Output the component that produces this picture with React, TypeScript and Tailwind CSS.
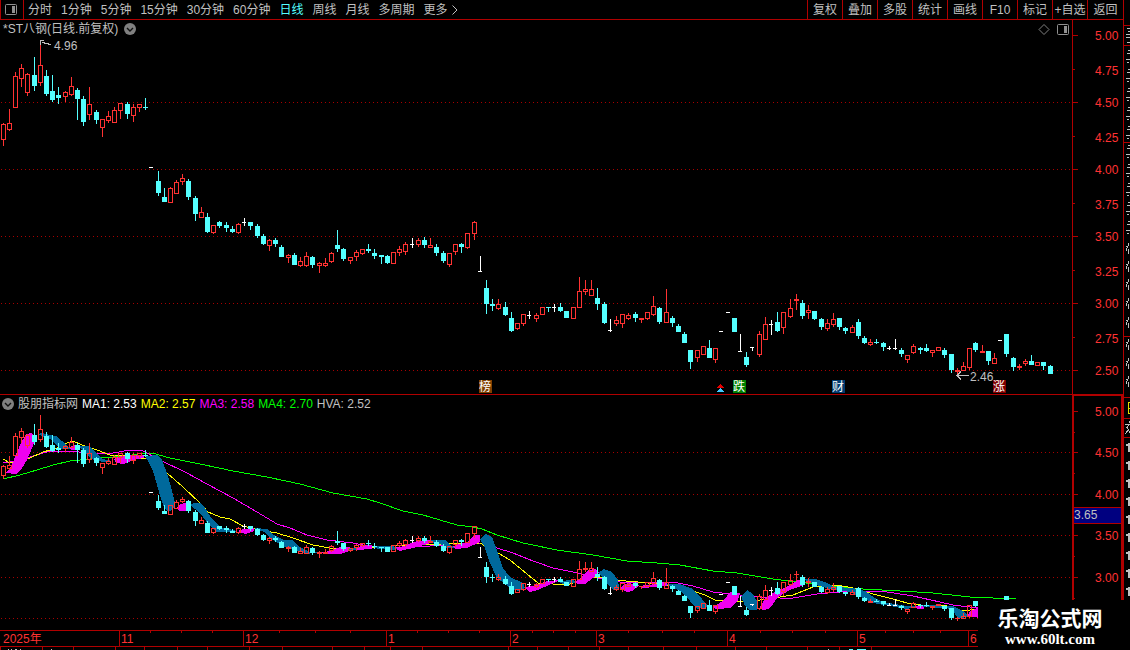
import React from "react";
import clsx from "clsx";

type Kind = "r" | "c" | "w";
// x, high, body top, body bottom, low, kind
type Candle = [number, number, number, number, number, Kind];

const RED = "#ff3232";
const CYAN = "#54ffff";
const LINE = "#b00000";
const GREY = "#c0c0c0";
const BLUE = "#00699c";
const PINK = "#f000f0";
const COLORS: Record<Kind, string> = { r: RED, c: CYAN, w: "#ffffff" };

const periods = ["分时", "1分钟", "5分钟", "15分钟", "30分钟", "60分钟", "日线", "周线", "月线", "多周期"];
const actions = ["复权", "叠加", "多股", "统计", "画线", "F10", "标记", "+自选", "返回"];

const candles: Candle[] = [
    [3, 123, 124, 140, 146, "r"], [9, 109, 123, 130, 131, "r"], [15, 72, 76, 108, 108, "r"], [21, 64, 68, 79, 87, "r"],
    [27, 73, 74, 93, 96, "r"], [34, 57, 75, 86, 91, "c"], [40, 43, 65, 83, 86, "r"], [46, 70, 76, 94, 96, "c"],
    [52, 75, 91, 100, 102, "c"], [58, 87, 95, 98, 104, "c"], [65, 91, 92, 97, 102, "r"], [71, 77, 86, 95, 96, "r"],
    [77, 88, 90, 99, 120, "c"], [83, 96, 99, 122, 126, "c"], [89, 87, 104, 115, 120, "r"], [96, 110, 112, 120, 124, "c"],
    [102, 119, 119, 128, 137, "r"], [108, 111, 116, 121, 123, "r"], [114, 107, 110, 123, 123, "r"], [120, 103, 103, 111, 119, "r"],
    [127, 102, 104, 114, 119, "c"], [133, 104, 107, 116, 122, "r"], [139, 104, 104, 108, 112, "r"], [145, 98, 107, 108, 110, "c"],
    [151, 167, 167, 168, 168, "w"], [158, 171, 181, 193, 196, "c"], [164, 188, 197, 202, 202, "c"], [170, 187, 188, 203, 203, "r"],
    [176, 180, 182, 194, 194, "r"], [182, 174, 178, 182, 185, "r"], [188, 179, 181, 197, 200, "c"], [195, 196, 198, 214, 221, "c"],
    [201, 207, 212, 218, 218, "r"], [207, 213, 217, 232, 233, "c"], [213, 225, 225, 233, 234, "r"], [219, 221, 222, 226, 228, "c"],
    [226, 222, 225, 228, 232, "c"], [232, 226, 229, 232, 233, "c"], [238, 223, 224, 233, 234, "r"], [244, 218, 222, 223, 226, "w"],
    [250, 222, 222, 226, 230, "c"], [257, 224, 226, 236, 238, "c"], [263, 234, 236, 244, 245, "c"], [269, 239, 240, 246, 251, "r"],
    [275, 238, 240, 244, 247, "c"], [281, 245, 247, 257, 257, "c"], [288, 254, 255, 258, 263, "r"], [294, 253, 255, 265, 265, "c"],
    [300, 257, 261, 266, 267, "r"], [306, 252, 256, 266, 267, "r"], [312, 256, 257, 265, 268, "c"], [319, 262, 263, 266, 273, "r"],
    [325, 258, 263, 266, 267, "r"], [331, 252, 253, 262, 263, "r"], [337, 230, 245, 249, 252, "c"], [343, 248, 249, 259, 261, "c"],
    [350, 257, 257, 261, 264, "r"], [356, 250, 252, 257, 261, "r"], [362, 249, 249, 254, 255, "r"], [368, 244, 249, 251, 253, "c"],
    [374, 249, 253, 256, 259, "c"], [381, 255, 255, 257, 264, "c"], [387, 255, 256, 263, 264, "c"], [393, 252, 252, 264, 264, "r"],
    [399, 246, 249, 253, 256, "r"], [405, 242, 244, 252, 255, "r"], [412, 238, 244, 245, 248, "w"], [418, 238, 240, 245, 247, "r"],
    [424, 237, 240, 245, 248, "c"], [430, 238, 245, 248, 248, "r"], [436, 244, 247, 253, 256, "c"], [443, 251, 253, 261, 263, "c"],
    [449, 253, 253, 265, 267, "r"], [455, 244, 244, 252, 255, "r"], [461, 243, 244, 247, 253, "c"], [467, 233, 233, 248, 249, "r"],
    [474, 221, 222, 234, 240, "r"], [480, 256, 271, 272, 272, "w"], [486, 280, 288, 304, 314, "c"], [492, 299, 304, 306, 311, "c"],
    [498, 299, 304, 309, 310, "r"], [505, 302, 307, 315, 316, "c"], [511, 312, 318, 331, 332, "c"], [517, 323, 323, 329, 330, "r"],
    [523, 314, 314, 324, 326, "r"], [529, 311, 315, 316, 319, "w"], [536, 313, 315, 319, 322, "r"], [542, 307, 307, 315, 315, "r"],
    [548, 307, 307, 308, 312, "c"], [554, 304, 307, 308, 312, "w"], [560, 303, 307, 311, 312, "c"], [566, 311, 311, 318, 318, "c"],
    [573, 307, 307, 319, 319, "r"], [579, 277, 291, 308, 308, "r"], [585, 280, 289, 292, 295, "r"], [591, 280, 289, 296, 296, "r"],
    [597, 288, 298, 304, 310, "c"], [604, 302, 304, 323, 324, "c"], [610, 319, 330, 331, 332, "w"], [616, 316, 320, 324, 326, "r"],
    [622, 314, 314, 324, 328, "r"], [628, 313, 315, 319, 320, "r"], [635, 312, 314, 318, 322, "c"], [641, 318, 318, 320, 323, "r"],
    [647, 312, 312, 319, 320, "r"], [653, 296, 306, 315, 316, "r"], [659, 307, 308, 322, 324, "c"], [666, 289, 312, 323, 323, "r"],
    [672, 316, 318, 323, 327, "c"], [678, 324, 326, 332, 332, "c"], [684, 332, 334, 343, 343, "c"], [690, 350, 350, 362, 369, "c"],
    [697, 350, 350, 358, 362, "r"], [703, 346, 346, 355, 355, "r"], [709, 340, 348, 358, 358, "c"], [715, 348, 348, 360, 363, "r"],
    [721, 331, 331, 332, 332, "w"], [728, 312, 312, 313, 313, "w"], [734, 318, 318, 332, 332, "c"], [740, 334, 351, 352, 352, "w"],
    [746, 352, 357, 365, 367, "c"], [752, 347, 347, 348, 351, "w"], [759, 331, 334, 355, 357, "r"], [765, 317, 324, 340, 340, "r"],
    [771, 320, 324, 325, 335, "w"], [777, 312, 322, 331, 332, "c"], [783, 312, 312, 328, 334, "r"], [790, 299, 308, 317, 318, "r"],
    [796, 294, 299, 301, 310, "r"], [802, 300, 303, 316, 319, "c"], [808, 305, 310, 313, 319, "r"], [814, 311, 311, 319, 320, "c"],
    [821, 318, 319, 327, 330, "c"], [827, 319, 323, 329, 331, "r"], [833, 313, 319, 325, 327, "r"], [839, 318, 318, 327, 330, "c"],
    [845, 327, 328, 331, 334, "c"], [852, 325, 327, 333, 333, "r"], [858, 319, 322, 336, 339, "c"], [864, 336, 338, 343, 344, "c"],
    [870, 339, 342, 345, 346, "r"], [876, 339, 342, 343, 344, "c"], [883, 342, 343, 347, 351, "c"], [889, 346, 348, 349, 350, "w"],
    [895, 339, 348, 349, 350, "w"], [901, 348, 350, 354, 357, "c"], [907, 355, 355, 360, 363, "r"], [913, 344, 346, 353, 354, "r"],
    [920, 347, 348, 350, 354, "c"], [926, 344, 348, 351, 352, "c"], [932, 350, 350, 353, 357, "r"], [938, 347, 347, 351, 351, "r"],
    [944, 348, 350, 355, 358, "c"], [951, 354, 354, 370, 373, "c"], [957, 368, 370, 372, 375, "r"], [963, 362, 366, 371, 371, "r"],
    [969, 348, 348, 368, 370, "r"], [975, 342, 343, 350, 352, "c"], [982, 345, 351, 353, 353, "r"], [988, 351, 351, 361, 365, "c"],
    [994, 353, 358, 364, 364, "r"], [1000, 340, 340, 341, 341, "w"], [1006, 334, 334, 354, 357, "c"], [1013, 357, 358, 367, 371, "c"],
    [1019, 364, 366, 368, 370, "r"], [1025, 359, 361, 364, 366, "r"], [1031, 355, 361, 365, 365, "c"], [1037, 362, 362, 366, 366, "r"],
    [1043, 362, 362, 366, 370, "c"], [1050, 365, 366, 374, 374, "c"],
];

const maLines = [
    {
        color: "#00ff00",
        points: "3,479 20,475 37,470 53,465 70,461 100,458 127,456 143,453 152,453 170,458 200,464 233,471 267,477 300,484 333,493 367,499 380,503 403,511 423,515 440,520 457,525 473,527 482,529 497,535 523,543 557,550 593,555 627,561 657,563 680,565 713,571 737,573 773,579 797,582 840,587 863,589 900,591 933,593 970,597 1016,599",
    },
    {
        color: "#ff00ff",
        points: "3,462 10,462 30,457 50,451 67,451 90,453 103,454 113,453 130,450 143,451 160,460 187,473 207,484 233,498 257,512 277,524 290,528 307,535 327,540 353,543 373,547 413,547 447,545 453,543 480,543 497,548 513,553 533,561 553,568 573,572 593,577 620,582 673,582 693,586 713,592 730,594 760,597 780,598 793,598 817,594 840,592 867,591 887,592 913,596 940,602 953,605 978,608",
    },
    {
        color: "#ffff00",
        points: "3,459 10,463 30,458 43,452 57,448 67,443 73,441 82,445 97,450 110,455 123,455 143,459 150,457 167,473 183,487 200,503 208,512 220,517 230,519 243,526 260,530 277,533 293,538 313,545 330,548 350,549 370,548 380,547 420,544 447,544 480,543 498,553 510,560 527,574 538,583 553,584 570,584 587,578 600,577 613,580 638,582 667,585 693,591 705,595 715,600 733,601 747,602 760,600 780,597 793,595 813,587 837,585 853,588 873,594 893,599 907,603 920,605 947,606 963,611 978,609",
    },
];

const ribbons: [string, string][] = [
    [PINK, "6,472 9,470 13,462 20,445 26,434 32,433 36,438 32,448 27,460 21,470 16,474 6,473"],
    [BLUE, "38,434 42,433 50,435 56,436 62,441 67,446 72,449 60,449 55,444 50,439 44,437"],
    [PINK, "69,447 76,445 78,449 71,450"],
    [BLUE, "78,446 90,446 95,452 103,459 112,461 103,462 94,460 87,455 82,449"],
    [PINK, "114,459 121,456 133,455 144,455 144,458 133,460 124,464 116,463"],
    [BLUE, "145,456 158,455 162,460 168,476 171,487 175,503 173,510 168,511 164,508 159,492 153,471 148,461"],
    [PINK, "176,508 180,504 186,503 187,511 180,511"],
    [BLUE, "190,505 194,503 200,503 205,508 212,519 220,527 237,531 237,532 217,532 208,524 201,514 195,509"],
    [PINK, "238,531 243,529 254,528 254,531 245,534"],
    [BLUE, "254,528 267,529 274,535 284,540 292,540 300,547 310,552 320,552 307,554 293,550 283,546 273,540 264,532"],
    [PINK, "320,553 329,551 340,547 350,547 350,551 340,554 327,554"],
    [BLUE, "349,548 358,548 358,550 349,550"],
    [PINK, "356,548 364,545 372,545 372,549 356,550"],
    [BLUE, "371,546 393,546 399,549 393,550 378,549"],
    [PINK, "396,549 406,545 417,541 431,540 431,543 417,547 400,551"],
    [BLUE, "431,540 445,540 452,546 455,548 447,548 440,544 431,542"],
    [PINK, "453,546 467,542 475,535 480,535 480,542 467,548 455,549"],
    [BLUE, "480,539 486,534 492,537 497,550 503,568 510,577 523,583 525,588 518,591 510,588 497,578 490,563 485,548"],
    [PINK, "525,587 537,585 547,581 560,580 547,586 535,591 529,592"],
    [BLUE, "558,581 573,580 577,583 563,584"],
    [PINK, "575,582 583,576 588,570 595,569 599,572 593,578 585,584 577,584"],
    [BLUE, "598,573 604,569 612,572 618,580 619,588 613,590 608,585 603,577"],
    [PINK, "619,588 628,583 640,585 632,591 627,592"],
    [PINK, "638,586 667,583 667,586 643,588"],
    [BLUE, "666,584 680,584 693,589 702,599 709,607 697,609 690,601 680,591 671,587"],
    [PINK, "712,608 724,600 730,592 740,593 738,600 730,608 717,609"],
    [BLUE, "741,596 747,590 753,594 758,603 757,610 750,610 745,606"],
    [PINK, "759,609 765,598 773,593 790,585 798,580 805,579 804,585 790,590 778,597 770,608 764,610"],
    [BLUE, "803,579 815,579 827,583 835,587 853,588 865,591 875,598 883,602 907,606 917,606 907,609 890,606 873,603 863,598 850,592 830,589 813,584"],
    [PINK, "915,606 924,606 924,609 917,609"],
    [BLUE, "923,605 953,606 963,611 969,617 958,618 952,610 947,608 923,607"],
    [PINK, "967,617 970,611 980,607 980,618 973,617"],
];

// Price pane coordinates scaled down to the indicator pane
const toIndicator = (y: number) => Math.round(452 + (y - 102) * 0.62);

function CandleShape({ candle }: { candle: Candle }) {
    const [x, high, top, bottom, low, kind] = candle;
    const color = COLORS[kind];
    const height = Math.max(1, bottom - top);
    const hollow = kind === "r" && height > 2;
    return (
        <g fill={color}>
            {top > high && <rect x={x} y={high} width={1} height={top - high} />}
            {low > top + height && <rect x={x} y={top + height} width={1} height={low - top - height} />}
            {hollow ? (
                <rect x={x - 1.5} y={top + 0.5} width={4} height={height - 1} fill="none" stroke={color} />
            ) : (
                <rect x={x - 2} y={top} width={kind === "w" ? 4 : 5} height={height} />
            )}
        </g>
    );
}

function Grid({ rows }: { rows: number[] }) {
    return (
        <>
            {rows.map((y) => (
                <line key={y} x1={1} x2="100%" y1={y + 0.5} y2={y + 0.5} stroke="#a80000" strokeDasharray="1 3" />
            ))}
        </>
    );
}

function Badge({ x, fill, label }: { x: number; fill: string; label: string }) {
    return (
        <g>
            <rect x={x} y={380} width={13} height={13} fill={fill} />
            <text x={x + 6} y={391} textAnchor="middle" fill="#fff">{label}</text>
        </g>
    );
}

function PanelIcon() {
    return (
        <svg width="12" height="12" viewBox="0 0 12 12" fill="none">
            <rect x="0.5" y="0.5" width="11" height="10" rx="1" stroke="#909090" />
            <rect x="7" y="2" width="3" height="7" fill="#909090" />
        </svg>
    );
}

function ToggleButton({ label }: { label: string }) {
    return (
        <button aria-label={label} className="shrink-0">
            <svg width="12" height="12" viewBox="0 0 12 12" className="block">
                <circle cx="6" cy="6" r="6" fill="#808080" />
                <path d="M3 5l3 3 3-3" fill="none" stroke="#101010" strokeWidth="1.4" />
            </svg>
        </button>
    );
}

function Toolbar() {
    return (
        <nav className="flex h-5 shrink-0 justify-between whitespace-nowrap border-b border-[#b00000]">
            <div className="flex items-center">
                <button aria-label="侧栏" className="flex h-full w-6 items-center border-x border-[#b00000] pl-1">
                    <PanelIcon />
                </button>
                <div className="flex gap-[9px] pl-1">
                    {periods.map((p) => (
                        <button key={p} className={clsx(p === "日线" && "text-[#54ffff]")}>{p}</button>
                    ))}
                    <button className="flex items-center gap-1">
                        更多
                        <svg width="6" height="10" viewBox="0 0 6 10" fill="none" stroke={GREY}>
                            <path d="M0.5 0.5L5 5L0.5 9.5" />
                        </svg>
                    </button>
                </div>
            </div>
            <div className="flex">
                {actions.map((a) => (
                    <button key={a} className="w-[35px] border-l border-[#b00000] text-center last:w-9">{a}</button>
                ))}
            </div>
        </nav>
    );
}

function PriceChart() {
    return (
        <div className="relative min-w-0 flex-1">
            <svg className="block h-[374px] w-full" fontSize="12" shapeRendering="crispEdges">
                <g transform="translate(0 -20)">
                    <Grid rows={[102, 169, 236, 303, 370]} />
                    {candles.map((c) => <CandleShape key={c[0]} candle={c} />)}
                    <path d="M51 44.5H48V43.5H44V42.5H41.5M40.5 45V40.5H44" fill="none" stroke={GREY} />
                    <text x={54} y={50} fill={GREY}>4.96</text>
                    <path d="M969 375.5H957M961 371.5L957 375.5L961 379.5" fill="none" stroke={GREY} />
                    <text x={970} y={381} fill={GREY}>2.46</text>
                    <Badge x={479} fill="#804000" label="榜" />
                    <Badge x={733} fill="#008000" label="跌" />
                    <Badge x={832} fill="#003a70" label="财" />
                    <Badge x={993} fill="#800000" label="涨" />
                    <path d="M720.5 384L724 388H717Z" fill="#e00000" />
                    <path d="M720.5 388L724 392H717Z" fill="#40c8ff" />
                </g>
            </svg>
            <div className="absolute left-[3px] top-0 flex items-center gap-1.5">
                <h1>*ST八钢(日线.前复权)</h1>
                <ToggleButton label="展开" />
            </div>
            <div className="absolute right-[3px] top-1 flex gap-[7px]">
                <svg width="12" height="12" viewBox="0 0 12 12" fill="none" stroke="#808080">
                    <path d="M6 0.5L11 5.5L6 10.5L1 5.5Z" />
                </svg>
                <PanelIcon />
            </div>
        </div>
    );
}

function PriceAxis() {
    const labels = ["5.00", "4.75", "4.50", "4.25", "4.00", "3.75", "3.50", "3.25", "3.00", "2.75", "2.50"];
    return (
        <svg className="block h-[374px] w-[51px] shrink-0 border-l border-[#b00000]" fontSize="12">
            {labels.map((label, i) => {
                const half = i % 2 === 1;
                const y = Math.ceil(15 + i * 33.5);
                return (
                    <g key={label}>
                        <rect x={0} y={y} width={half ? 2 : 5} height={1} fill={LINE} />
                        <text x={22} y={half ? y + 6 : y + 5} fill={RED}>{label}</text>
                    </g>
                );
            })}
        </svg>
    );
}

function IndicatorChart() {
    return (
        <div className="relative min-w-0 flex-1">
            <svg className="block h-[235px] w-full" shapeRendering="crispEdges">
                <g transform="translate(0 -395)">
                    <Grid rows={[452, 494, 535, 577, 618]} />
                    {maLines.map((l) => (
                        <polyline key={l.color} points={l.points} fill="none" stroke={l.color} />
                    ))}
                    {ribbons.map(([fill, points]) => <polygon key={points} points={points} fill={fill} />)}
                    {candles.filter((c) => c[0] < 1010).map(([x, h, t, b, l, k]) => (
                        <CandleShape
                            key={x}
                            candle={[x, toIndicator(h), toIndicator(t), toIndicator(b), toIndicator(l), k]}
                        />
                    ))}
                </g>
            </svg>
            <div className="absolute left-[2px] top-0 flex items-center gap-1 whitespace-nowrap">
                <ToggleButton label="指标" />
                <span>股朋指标网</span>
                <span className="text-white">MA1: 2.53</span>
                <span className="text-[#ffff00]">MA2: 2.57</span>
                <span className="text-[#ff00ff]">MA3: 2.58</span>
                <span className="text-[#00ff00]">MA4: 2.70</span>
                <span>HVA: 2.52</span>
            </div>
        </div>
    );
}

function IndicatorAxis() {
    const labels: [string, number][] = [["5.00", 411], ["4.50", 452], ["4.00", 494], ["3.50", 535], ["3.00", 577]];
    return (
        <svg className="block h-[235px] w-[51px] shrink-0 border-x-2 border-t border-[#b00000]" fontSize="12">
            <g transform="translate(0 -396)">
                {labels.map(([label, y]) => (
                    <g key={label}>
                        <rect x={0} y={y} width={4} height={1} fill={LINE} />
                        <rect x={0} y={y + 21} width={1} height={1} fill={LINE} />
                        <text x={21} y={y + 5} fill={RED}>{label}</text>
                    </g>
                ))}
                <rect x={0} y={507} width={47} height={17} fill={LINE} />
                <rect x={0} y={508} width={47} height={15} fill="#000080" />
                <text x={0} y={519} fill={GREY}>3.65</text>
            </g>
        </svg>
    );
}

function TimeAxis() {
    const months: [string, number][] = [["11", 119], ["12", 243], ["1", 386], ["2", 510], ["3", 596], ["4", 727], ["5", 857], ["6", 968]];
    const minor = [150, 181, 212, 279, 315, 350, 417, 448, 479, 532, 553, 575, 628, 662, 694, 760, 792, 825, 885, 913, 940];
    const below = [0, 42, 73, 115, 144, 177, 207, 249, 282, 332, 364, 390, 422, 508, 537, 568, 599, 628, 663, 696, 735, 766, 807, 839, 871];
    return (
        <svg className="block h-5 w-full shrink-0 border-t border-[#b00000]" fontSize="12">
            <rect y={15} width="100%" height={1} fill={LINE} />
            <text x={3} y={12} fill={RED}>2025年</text>
            {months.map(([label, x]) => (
                <g key={label}>
                    <rect x={x} width={1} height={15} fill={LINE} />
                    <text x={x + 2} y={12} fill={RED}>{label}</text>
                </g>
            ))}
            {minor.map((x) => <rect key={x} x={x} width={1} height={2} fill={LINE} />)}
            {below.map((x) => <rect key={x} x={x} y={16} width={1} height={3} fill={LINE} />)}
            <path d="M8 18.5h1M11 18.5h1M15 18.5h2M20 18.5h1M51 18.5h1M828 18.5h1" stroke={GREY} />
            <path d="M849 18.5h4M857 18.5h9" stroke={CYAN} />
        </svg>
    );
}

// Left edge of the quote panel, mostly scrolled out of view
function QuotePanel() {
    return (
        <aside className="w-[7px] shrink-0 overflow-hidden border-l border-[#b00000]">
            <svg className="block h-[600px] w-full" shapeRendering="crispEdges" fill="none" stroke={GREY}>
                {[25, 45, 142, 336, 397, 418, 437].map((y) => (
                    <path key={y} d={`M0 ${y}.5H6`} stroke={LINE} />
                ))}
                <path d="M3 28.5H6M4 31.5H6M2 34.5H6M2 37.5H6M3 42.5H6" />
                {[50, 69, 88, 107, 126, 145, 164, 183, 202, 221].map((y) => (
                    <path key={y} d={`M4 ${y}.5H6M3 ${y + 3}.5H6M2 ${y + 9}.5H6M3 ${y + 12}.5H5`} />
                ))}
                {[246, 264, 282, 301, 320, 342, 361, 379].map((y) => (
                    <path key={y} d={`M2 ${y}.5H4M5 ${y - 3}L2 ${y + 5}M4.5 ${y + 3}V${y + 8}`} />
                ))}
                <path d="M6 402.5H4.5V413.5H6M4 408.5H6" stroke="#e0e000" />
                <path d="M1 424.5H6M5 421V423M2 428L5 425M3 427L6 433M5 429L1 434" />
                {[443, 461, 479, 497, 515, 533, 551, 569, 587].map((y) => (
                    <path key={y} d={`M2 ${y + 1}.5H4M5 ${y}V${y + 9}`} strokeWidth="2" />
                ))}
            </svg>
        </aside>
    );
}

function App() {
    return (
        <div className="relative flex min-h-screen overflow-hidden bg-black font-['Liberation_Sans','Noto_Sans_CJK_SC',sans-serif] text-xs leading-[18px] text-[#c0c0c0]">
            <main className="flex min-w-0 flex-1 flex-col">
                <Toolbar />
                <section className="flex border-b border-[#b00000]">
                    <PriceChart />
                    <PriceAxis />
                </section>
                <section className="flex">
                    <IndicatorChart />
                    <IndicatorAxis />
                </section>
                <TimeAxis />
            </main>
            <QuotePanel />

            {/* Site mark over the bottom right corner */}
            <a href="#" className="absolute bottom-0 right-0 flex h-[50px] w-[152px] flex-col items-center bg-black pr-2 pt-2 text-white">
                <span className="text-[21px] font-bold leading-[22px]">乐淘公式网</span>
                <span className="font-['Liberation_Serif',serif] text-[15px] font-bold leading-[18px]">www.60lt.com</span>
            </a>
        </div>
    );
}

export default App;
